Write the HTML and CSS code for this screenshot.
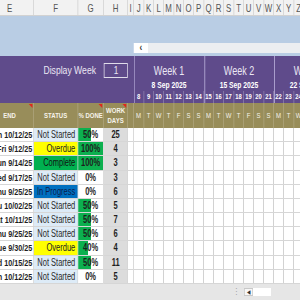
FILE: index.html
```html
<!DOCTYPE html>
<html>
<head>
<meta charset="utf-8">
<link rel="stylesheet" href="styles.css">
</head>
<body>
<div class="sheet">
  <div class="cols letters">
    <span>E</span><span>F</span><span>G</span><span>H</span><span>I</span>
    <span>J</span><span>K</span><span>L</span><span>M</span><span>N</span><span>O</span><span>P</span><span>Q</span><span>R</span><span>S</span><span>T</span><span>U</span><span>V</span><span>W</span><span>X</span><span>Y</span><span>Z</span>
  </div>
  <div class="ribbon">
    <div class="hscroll"><span class="btn">&lsaquo;</span><span class="track"></span></div>
  </div>
  <div class="banner">
    <div class="disp"><span class="lbl">Display Week</span><span class="box">1</span></div>
    <div class="week">
      <div class="wt">Week 1</div>
      <div class="wdate">8 Sep 2025</div>
      <div class="nums"><span>8</span><span>9</span><span>10</span><span>11</span><span>12</span><span>13</span><span>14</span></div>
    </div>
    <div class="week">
      <div class="wt">Week 2</div>
      <div class="wdate">15 Sep 2025</div>
      <div class="nums"><span>15</span><span>16</span><span>17</span><span>18</span><span>19</span><span>20</span><span>21</span></div>
    </div>
    <div class="week">
      <div class="wt">Week 3</div>
      <div class="wdate">22 Sep 2025</div>
      <div class="nums"><span>22</span><span>23</span><span>24</span><span>25</span><span>26</span><span>27</span><span>28</span></div>
    </div>
  </div>
  <div class="cols hdr">
    <div class="note">END</div>
    <div>STATUS</div>
    <div class="note">% DONE</div>
    <div class="note">WORK<br>DAYS</div>
    <div></div>
    <div class="dl">M</div><div class="dl">T</div><div class="dl">W</div><div class="dl">T</div><div class="dl">F</div><div class="dl">S</div><div class="dl">S</div>
    <div class="dl">M</div><div class="dl">T</div><div class="dl">W</div><div class="dl">T</div><div class="dl">F</div><div class="dl">S</div><div class="dl">S</div>
    <div class="dl">M</div><div class="dl">T</div><div class="dl">W</div>
  </div>
  <div class="data">
    <div class="cols row">
      <div class="end">Sun 10/12/25</div><div class="st">Not Started</div><div class="pc" style="--p:50%">50%</div><div class="wd">25</div><div class="ic"></div>
      <div class="gantt"><div class="bar g" style="grid-column:1 / span 17"></div></div>
    </div>
    <div class="cols row">
      <div class="end">Fri 9/12/25</div><div class="st ov">Overdue</div><div class="pc" style="--p:100%">100%</div><div class="wd">4</div><div class="ic"></div>
      <div class="gantt"><div class="bar g" style="grid-column:2 / span 4"></div></div>
    </div>
    <div class="cols row">
      <div class="end">Sun 9/14/25</div><div class="st cp">Complete</div><div class="pc" style="--p:100%">100%</div><div class="wd">3</div><div class="ic"></div>
      <div class="gantt"><div class="bar g" style="grid-column:3 / span 5"></div></div>
    </div>
    <div class="cols row">
      <div class="end">Wed 9/17/25</div><div class="st">Not Started</div><div class="pc" style="--p:0%">0%</div><div class="wd">3</div><div class="ic"></div>
      <div class="gantt"><div class="bar b" style="grid-column:6 / span 5"></div></div>
    </div>
    <div class="cols row">
      <div class="end">Thu 9/25/25</div><div class="st ip">In Progress</div><div class="pc" style="--p:0%">0%</div><div class="wd">6</div><div class="ic"></div>
      <div class="gantt"><div class="bar b" style="grid-column:11 / span 7"></div></div>
    </div>
    <div class="cols row">
      <div class="end">Thu 10/02/25</div><div class="st">Not Started</div><div class="pc" style="--p:50%">50%</div><div class="wd">5</div><div class="ic"></div>
      <div class="gantt"></div>
    </div>
    <div class="cols row">
      <div class="end">Sat 10/11/25</div><div class="st">Not Started</div><div class="pc" style="--p:50%">50%</div><div class="wd">7</div><div class="ic"></div>
      <div class="gantt"></div>
    </div>
    <div class="cols row">
      <div class="end">Thu 9/25/25</div><div class="st">Not Started</div><div class="pc" style="--p:50%">50%</div><div class="wd">6</div><div class="ic"></div>
      <div class="gantt"><div class="bar g" style="grid-column:11 / span 4"></div><div class="bar b" style="grid-column:15 / span 3"></div></div>
    </div>
    <div class="cols row">
      <div class="end">Tue 9/30/25</div><div class="st ov">Overdue</div><div class="pc" style="--p:40%">40%</div><div class="wd">4</div><div class="ic"></div>
      <div class="gantt"></div>
    </div>
    <div class="cols row">
      <div class="end">Wed 10/15/25</div><div class="st">Not Started</div><div class="pc" style="--p:50%">50%</div><div class="wd">11</div><div class="ic"></div>
      <div class="gantt"></div>
    </div>
    <div class="cols row">
      <div class="end">Sun 10/12/25</div><div class="st">Not Started</div><div class="pc" style="--p:0%">0%</div><div class="wd">5</div><div class="ic"></div>
      <div class="gantt"></div>
    </div>
  </div>
  <div class="foot">
    <span class="dots">&#8942;</span>
    <span class="nav">&#9664;</span>
    <span class="field"></span>
  </div>
</div>
</body>
</html>
```
FILE: styles.css
```css
* { box-sizing: border-box; }
html, body { margin: 0; padding: 0; }
body {
  width: 300px;
  height: 300px;
  overflow: hidden;
  background: #fff;
  font-family: "Liberation Sans", Arial, sans-serif;
}

/* The sheet is laid out at its natural width and shown horizontally
   condensed, as in the captured screenshot. */
.sheet {
  width: 424px;
  transform-origin: 0 0;
  transform: translateX(-14px) scaleX(0.75);
}
.cols {
  display: grid;
  grid-template-columns: 64px 58.667px 34.667px 32px 8px repeat(17, 13.333px);
}

/* column letters */
.letters {
  height: 16px;
  background: #f2f2f2;
  border-bottom: 1px solid #d2d2d2;
  color: #555;
  font-size: 10.5px;
}
.letters span {
  display: flex;
  align-items: center;
  justify-content: center;
  border-right: 1.333px solid #d0d0d0;
  overflow: hidden;
}

/* light blue ribbon */
.ribbon {
  height: 40px;
  background: #b9cde4;
  display: flex;
  flex-direction: column;
  justify-content: flex-end;
  padding-bottom: 3px;
}
.hscroll { margin-left: 197.333px; height: 10px; display: flex; }
.hscroll .btn {
  width: 18.667px;
  background: #fff;
  color: #333;
  font-size: 11px;
  line-height: 9px;
  text-align: center;
  font-weight: bold;
}
.hscroll .track { flex: 1; background: #eceef1; }

/* purple banner */
.banner {
  height: 47px;
  background: #5f4b8b;
  display: flex;
  color: #ece8f4;
}
.disp {
  flex: 0 0 197.333px;
  display: flex;
  justify-content: flex-end;
  align-items: flex-start;
  gap: 10.667px;
  padding: 7px 8px 0 0;
}
.disp .lbl { font-size: 11.5px; line-height: 15px; }
.disp .box {
  width: 32px;
  height: 15px;
  border: 1.333px solid #e0dcea;
  font-size: 11px;
  line-height: 13px;
  text-align: center;
}
.week {
  flex: 0 0 93.333px;
  box-shadow: inset 1.333px 0 #a99dcc;
  display: flex;
  flex-direction: column;
  padding-top: 7px;
  text-align: center;
  white-space: nowrap;
}
.wt { height: 16px; line-height: 16px; font-size: 12px; }
.wdate { height: 12px; line-height: 12px; font-size: 9px; font-weight: bold; color: #fff; }
.nums {
  height: 12px;
  display: grid;
  grid-template-columns: repeat(7, 13.333px);
  font-size: 7.8px;
  font-weight: bold;
  color: #fff;
}
.nums span {
  line-height: 12px;
  border-right: 1.333px solid rgba(255, 255, 255, 0.3);
  overflow: hidden;
}

/* olive header */
.hdr {
  height: 25px;
  background: #988d5a;
  color: #f6f3ea;
  font-size: 8px;
  font-weight: bold;
  line-height: 9.5px;
}
.hdr > div {
  display: flex;
  align-items: center;
  justify-content: center;
  text-align: center;
  position: relative;
  border-right: 1.333px solid rgba(255, 255, 255, 0.22);
  overflow: hidden;
  white-space: nowrap;
}
.hdr .dl { font-weight: normal; font-size: 8px; }
.note::after {
  content: "";
  position: absolute;
  top: 1px;
  right: 1.333px;
  border-top: 4px solid #e0261c;
  border-left: 5.333px solid transparent;
}

/* data rows */
.row { height: calc(156px / 11); }
.row > div {
  border-right: 1.333px solid #d2d2d2;
  border-bottom: 1px solid #d6d6d6;
  display: flex;
  align-items: center;
  overflow: hidden;
  white-space: nowrap;
}
.end {
  justify-content: flex-end;
  padding-right: 1.333px;
  font-weight: bold;
  font-size: 9.6px;
  color: #1e1e1e;
}
.st {
  justify-content: flex-end;
  padding-right: 2.667px;
  font-size: 10px;
  color: #2a2a2a;
  background: #ddebf7;
}
.st.ov { background: #ffff00; color: #222; }
.st.cp { background: #00b050; color: #111; }
.st.ip { background: #0070c0; color: #0b1d4d; }
.pc {
  justify-content: center;
  font-weight: bold;
  font-size: 10px;
  color: #1e1e1e;
  background: linear-gradient(to right, #0cb04f var(--p), #fff var(--p));
}
.wd {
  justify-content: center;
  font-weight: bold;
  font-size: 10px;
  color: #1e1e1e;
  background: #dcdcdc;
}
.row > .gantt {
  display: grid;
  grid-template-columns: repeat(17, 13.333px);
  grid-column: 6 / -1;
  border-right: 0;
  background: repeating-linear-gradient(to right, #fff 0 12px, #d2d2d2 12px 13.333px);
}
.bar.g { background: repeating-linear-gradient(to right, #00b050 0 12px, #86d6a8 12px 13.333px); }
.bar.b { background: repeating-linear-gradient(to right, #1a7ee0 0 12px, #86b8ec 12px 13.333px); }

/* bottom bar */
.foot {
  height: 16px;
  background: #e6e6e6;
  display: flex;
  align-items: center;
  padding-left: 329.333px;
}
.dots { width: 5.333px; margin-right: 9.333px; color: #999; font-size: 9px; line-height: 8px; }
.nav {
  width: 12px;
  height: 8px;
  background: #f7f7f7;
  border: 1.333px solid #c8c8c8;
  color: #333;
  font-size: 6px;
  line-height: 6px;
  text-align: center;
}
.field { width: 24px; height: 8px; background: #fff; }
```
